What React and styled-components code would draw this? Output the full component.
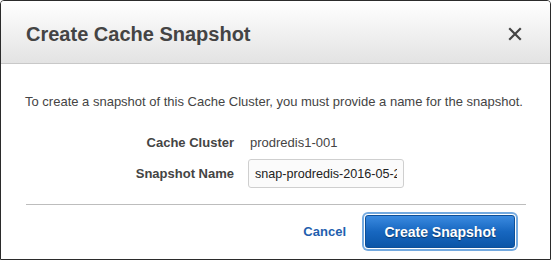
import React from "react";
import styled, { createGlobalStyle } from "styled-components";

const GlobalStyle = createGlobalStyle`
  html, body {
    margin: 0;
    padding: 0;
    background: #ffffff;
  }
  * {
    box-sizing: border-box;
  }
`;

const Dialog = styled.div`
  width: 551px;
  height: 260px;
  display: flex;
  flex-direction: column;
  border: 1px solid #2b2b2b;
  border-radius: 4px 4px 0 0;
  background: #ffffff;
  font-family: "Liberation Sans", Arial, sans-serif;
  color: #444444;
  overflow: hidden;
`;

const Header = styled.div`
  height: 63px;
  flex-shrink: 0;
  display: flex;
  align-items: center;
  justify-content: space-between;
  padding: 4px 28px 0 25px;
  background: linear-gradient(to bottom, #ffffff 0%, #e3e3e3 100%);
  border-bottom: 1px solid #c8c8c8;
`;

const Title = styled.h2`
  margin: 0;
  font-size: 20px;
  font-weight: bold;
  color: #444444;
`;

const CloseButton = styled.button`
  border: 0;
  padding: 0;
  background: none;
  width: 14px;
  height: 14px;
  display: flex;
  cursor: pointer;
`;

const Body = styled.div`
  flex: 1;
  display: flex;
  flex-direction: column;
  padding: 30px 25px 0 24px;
`;

const Intro = styled.p`
  margin: 0 0 24px 0;
  font-size: 13px;
  line-height: 16px;
  color: #444444;
`;

const Field = styled.div`
  display: grid;
  grid-template-columns: 209px 1fr;
  column-gap: ${(p) => p.gap || 16}px;
  align-items: center;
  margin-bottom: ${(p) => p.spacing || 0}px;
`;

const Label = styled.span`
  text-align: right;
  font-size: 13px;
  line-height: 17px;
  font-weight: bold;
  color: #444444;
`;

const Value = styled.span`
  font-size: 13px;
  line-height: 17px;
  color: #444444;
`;

const TextInput = styled.input`
  width: 156px;
  height: 29px;
  padding: 0 6px;
  border: 1px solid #cfcfcf;
  border-radius: 3px;
  background: #fbfbfb;
  font-family: "Liberation Sans", Arial, sans-serif;
  font-size: 12.6px;
  color: #222222;
  outline: none;
`;

const Divider = styled.hr`
  margin: 16px 0 0 1px;
  width: 500px;
  border: 0;
  border-top: 1px solid #bdbdbd;
`;

const Footer = styled.div`
  display: flex;
  justify-content: flex-end;
  align-items: center;
  gap: 19px;
  padding: 10px 10px 0 0;
`;

const CancelLink = styled.a`
  font-size: 13px;
  font-weight: bold;
  color: #1f5fae;
  text-decoration: none;
  cursor: pointer;
`;

const PrimaryButton = styled.button`
  width: 150px;
  height: 33px;
  border: 1px solid #0d4f98;
  border-radius: 3px;
  box-shadow: 0 0 0 1px #ffffff, 0 0 0 3px #74aae0;
  background: linear-gradient(to bottom, #3a8ae0 0%, #1767c0 50%, #0a55a8 100%);
  color: #ffffff;
  font-family: "Liberation Sans", Arial, sans-serif;
  font-size: 14px;
  font-weight: bold;
  text-shadow: 0 1px 1px rgba(0, 0, 0, 0.45);
  cursor: pointer;
`;

const CloseIcon = () => (
  <svg width="14" height="14" viewBox="0 0 14 14">
    <path d="M2 2 L12 12 M12 2 L2 12" stroke="#444" strokeWidth="2.2" strokeLinecap="square" />
  </svg>
);

export default function App() {
  return (
    <>
      <GlobalStyle />
      <Dialog>
        <Header>
          <Title>Create Cache Snapshot</Title>
          <CloseButton aria-label="Close">
            <CloseIcon />
          </CloseButton>
        </Header>
        <Body>
          <Intro>
            To create a snapshot of this Cache Cluster, you must provide a name for the snapshot.
          </Intro>
          <Field spacing={8}>
            <Label>Cache Cluster</Label>
            <Value>prodredis1-001</Value>
          </Field>
          <Field gap={14}>
            <Label>Snapshot Name</Label>
            <TextInput defaultValue="snap-prodredis-2016-05-26" />
          </Field>
          <Divider />
          <Footer>
            <CancelLink>Cancel</CancelLink>
            <PrimaryButton>Create Snapshot</PrimaryButton>
          </Footer>
        </Body>
      </Dialog>
    </>
  );
}
